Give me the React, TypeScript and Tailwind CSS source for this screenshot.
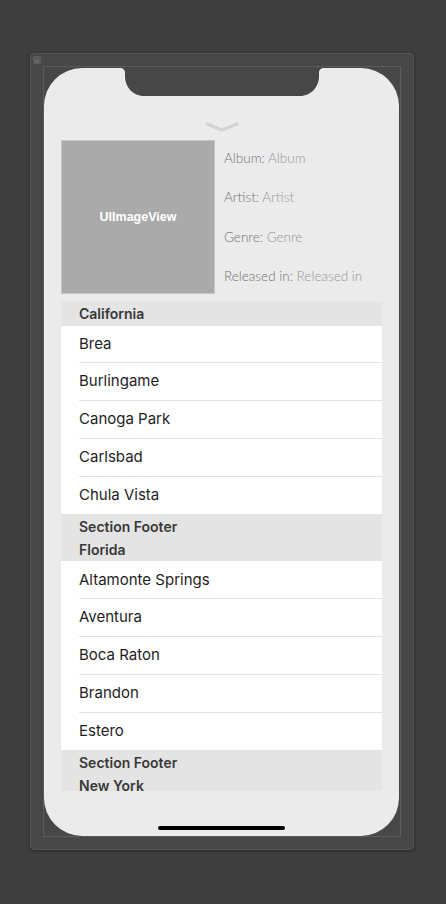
import React from 'react';

const sections = [
  { title: 'California', rows: ['Brea', 'Burlingame', 'Canoga Park', 'Carlsbad', 'Chula Vista'] },
  { title: 'Florida', rows: ['Altamonte Springs', 'Aventura', 'Boca Raton', 'Brandon', 'Estero'] },
  { title: 'New York', rows: [] as string[] },
];

const details = [
  ['Album:', 'Album'],
  ['Artist:', 'Artist'],
  ['Genre:', 'Genre'],
  ['Released in:', 'Released in'],
];

const Notch: React.FC = () => (
  <svg className="absolute left-[76px] top-0" width="204" height="29" viewBox="0 0 204 29">
    <path
      d="M0 0 H204 C201 0 199 1.5 199 5 V8 C199 19 191 28 180 28 H24 C13 28 5 19 5 8 V5 C5 1.5 3 0 0 0 Z"
      fill="#474747"
    />
  </svg>
);

const App: React.FC = () => {
  return (
    <div className="min-h-screen bg-[#3e3e3e] pt-[53px] pl-[30px]" style={{ fontFamily: 'Inter, sans-serif' }}>
      <div className="relative w-[384px] h-[797px] bg-[#474747] border border-[#555555] rounded-[4px] p-[12px] shadow-[0_1px_3px_rgba(0,0,0,0.4)]">
        <div className="absolute left-[2px] top-[2px] w-[8px] h-[8px] rounded-[1px] bg-[#5a5a5a] flex items-center justify-center text-[7px] leading-none text-[#7a7a7a]">×</div>
        <div className="w-[358px] h-[771px] border border-[#5b5b5b]">
          <div className="relative w-[355px] h-[768px] mt-px rounded-[38px] bg-[#ebebeb] overflow-hidden">
            <Notch />

            <div className="flex justify-center pt-[54px]">
              <svg width="34" height="10" viewBox="0 0 34 10">
                <polyline points="2,2 17,8 32,2" fill="none" stroke="#d2d2d2" strokeWidth="3" strokeLinecap="round" strokeLinejoin="round" />
              </svg>
            </div>

            <div className="px-[17px] pt-[8px]">
              <div className="flex gap-[9px]">
                <div className="w-[154px] h-[154px] bg-[#aaaaaa] border border-[#c6c6c6] flex items-center justify-center">
                  <span className="text-white font-bold text-[12.5px]" style={{ fontFamily: '"Liberation Sans", Arial, sans-serif' }}>
                    UIImageView
                  </span>
                </div>
                <div
                  className="flex flex-col justify-between h-[154px] py-[10px] text-[13.5px] leading-[16px] font-light"
                  style={{ fontFamily: 'Lato, sans-serif' }}
                >
                  {details.map(([k, v]) => (
                    <div key={k}>
                      <span className="text-[#727272]">{k} </span>
                      <span className="text-[#969696]">{v}</span>
                    </div>
                  ))}
                </div>
              </div>

              <div className="mt-[8px] h-[489px] overflow-hidden">
                {sections.map((s, si) => (
                  <div key={s.title}>
                    <div className="h-[23.5px] bg-[#e4e4e4] pl-[18px] flex items-center text-[14px] font-semibold text-[#383838]">
                      {s.title}
                    </div>
                    {s.rows.length > 0 && (
                      <div className="bg-white">
                        {s.rows.map((r, ri) => (
                          <div key={r} className="pl-[18px]">
                            <div
                              className={
                                ri < s.rows.length - 1
                                  ? 'h-[37.8px] flex items-center border-b border-[#e2e2e2] text-[15px] text-[#1e1e1e]'
                                  : 'h-[37.8px] flex items-center text-[15px] text-[#1e1e1e]'
                              }
                            >
                              {r}
                            </div>
                          </div>
                        ))}
                      </div>
                    )}
                    {si < sections.length - 1 && (
                      <div className="h-[23.5px] bg-[#e4e4e4] pl-[18px] flex items-center text-[14px] font-semibold text-[#383838]">
                        Section Footer
                      </div>
                    )}
                  </div>
                ))}
              </div>
            </div>

            <div className="absolute left-[114px] bottom-[6px] w-[127px] h-[4px] rounded-full bg-black" />
          </div>
        </div>
      </div>
    </div>
  );
};

export default App;
